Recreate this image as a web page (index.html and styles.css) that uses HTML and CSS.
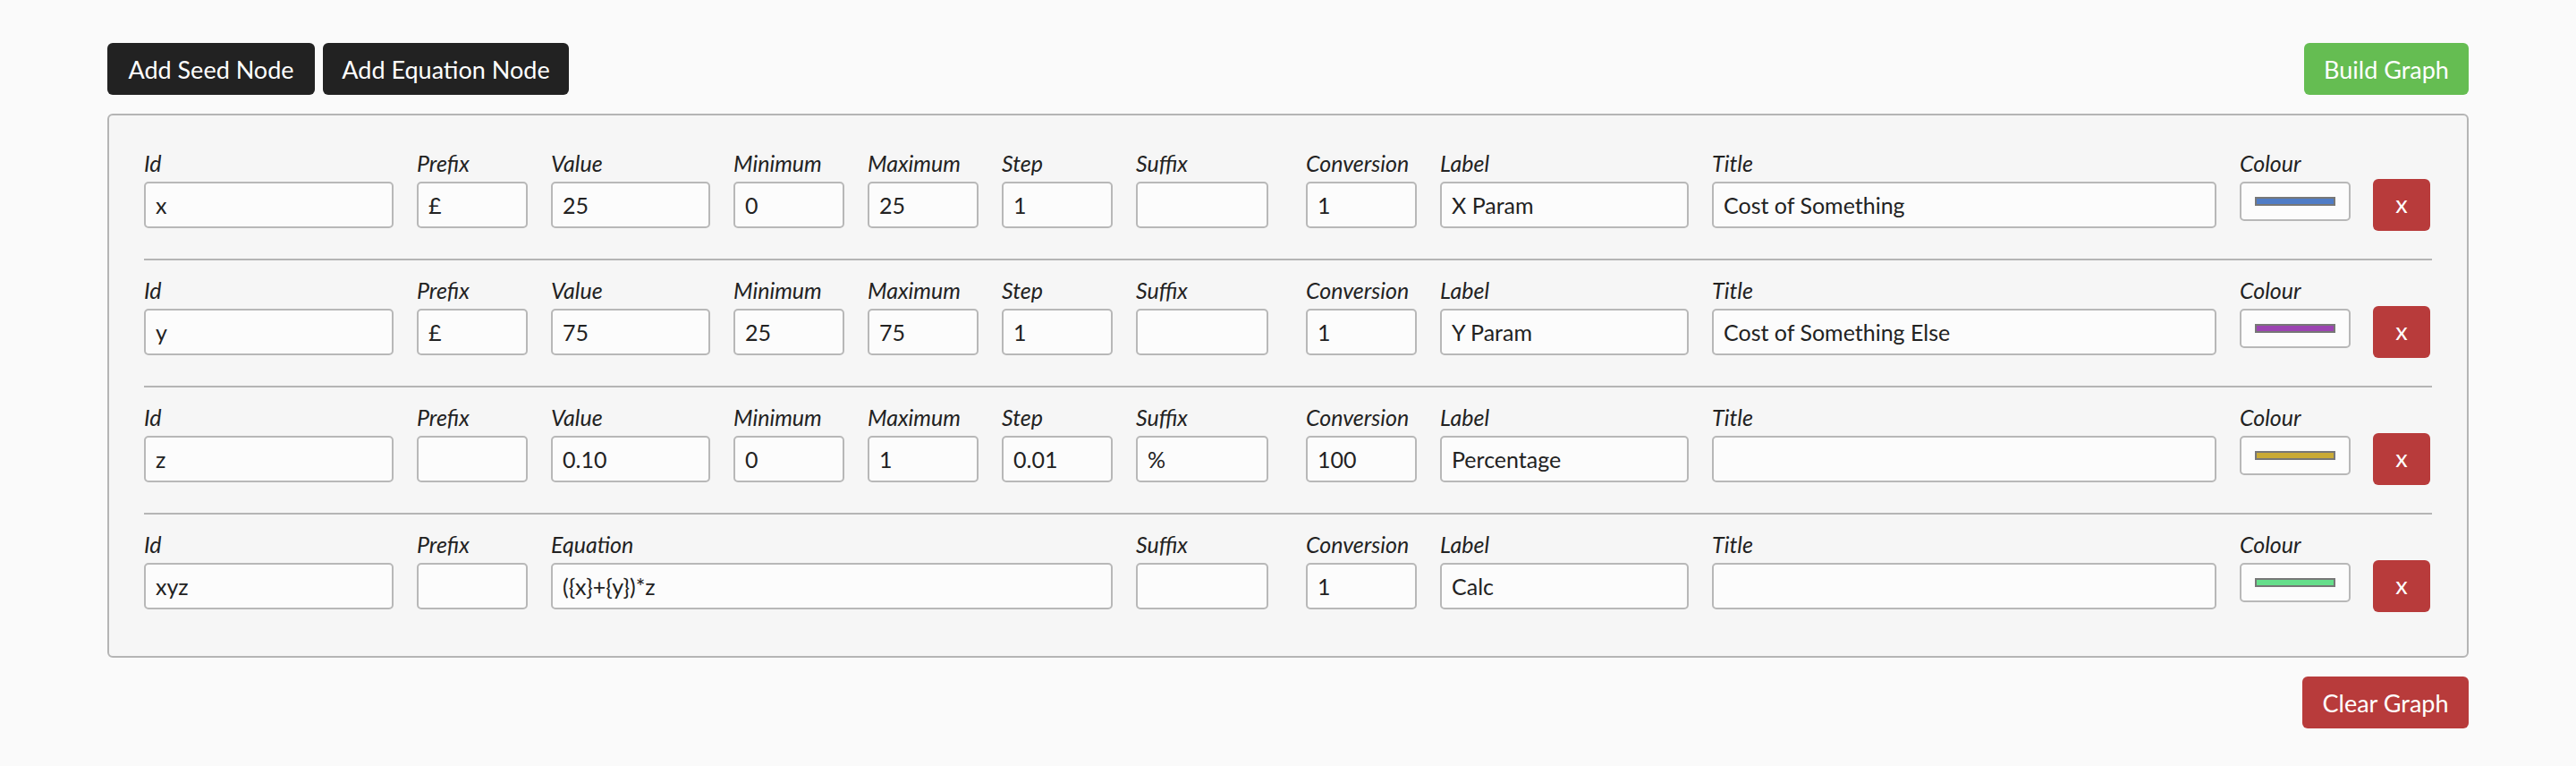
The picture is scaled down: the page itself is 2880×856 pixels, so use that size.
FILE: index.html
```html
<!DOCTYPE html>
<html lang="en">
<head>
<meta charset="utf-8">
<title>Graph Builder</title>
<link rel="stylesheet" href="styles.css">
</head>
<body>
<div class="container">
  <div class="toolbar">
    <div class="btn-group">
      <button class="btn btn-dark btn-seed">Add Seed Node</button>
      <button class="btn btn-dark btn-eq">Add Equation Node</button>
    </div>
    <button class="btn btn-green">Build Graph</button>
  </div>

  <div class="panel">
    <div class="node">
      <div class="field"><label class="lbl">Id</label><input class="inp" value="x"></div>
      <div class="field"><label class="lbl">Prefix</label><input class="inp" value="£"></div>
      <div class="field"><label class="lbl">Value</label><input class="inp" value="25"></div>
      <div class="field"><label class="lbl">Minimum</label><input class="inp" value="0"></div>
      <div class="field"><label class="lbl">Maximum</label><input class="inp" value="25"></div>
      <div class="field"><label class="lbl">Step</label><input class="inp" value="1"></div>
      <div class="field"><label class="lbl">Suffix</label><input class="inp inp-suffix" value=""></div>
      <div class="field"><label class="lbl">Conversion</label><input class="inp" value="1"></div>
      <div class="field"><label class="lbl">Label</label><input class="inp" value="X Param"></div>
      <div class="field"><label class="lbl">Title</label><input class="inp" value="Cost of Something"></div>
      <div class="field"><label class="lbl">Colour</label><div class="colour"><span class="swatch sw-blue"></span></div></div>
      <div class="field field-remove"><button class="btn-x">x</button></div>
    </div>
    <hr class="sep">
    <div class="node">
      <div class="field"><label class="lbl">Id</label><input class="inp" value="y"></div>
      <div class="field"><label class="lbl">Prefix</label><input class="inp" value="£"></div>
      <div class="field"><label class="lbl">Value</label><input class="inp" value="75"></div>
      <div class="field"><label class="lbl">Minimum</label><input class="inp" value="25"></div>
      <div class="field"><label class="lbl">Maximum</label><input class="inp" value="75"></div>
      <div class="field"><label class="lbl">Step</label><input class="inp" value="1"></div>
      <div class="field"><label class="lbl">Suffix</label><input class="inp inp-suffix" value=""></div>
      <div class="field"><label class="lbl">Conversion</label><input class="inp" value="1"></div>
      <div class="field"><label class="lbl">Label</label><input class="inp" value="Y Param"></div>
      <div class="field"><label class="lbl">Title</label><input class="inp" value="Cost of Something Else"></div>
      <div class="field"><label class="lbl">Colour</label><div class="colour"><span class="swatch sw-purple"></span></div></div>
      <div class="field field-remove"><button class="btn-x">x</button></div>
    </div>
    <hr class="sep">
    <div class="node">
      <div class="field"><label class="lbl">Id</label><input class="inp" value="z"></div>
      <div class="field"><label class="lbl">Prefix</label><input class="inp" value=""></div>
      <div class="field"><label class="lbl">Value</label><input class="inp" value="0.10"></div>
      <div class="field"><label class="lbl">Minimum</label><input class="inp" value="0"></div>
      <div class="field"><label class="lbl">Maximum</label><input class="inp" value="1"></div>
      <div class="field"><label class="lbl">Step</label><input class="inp" value="0.01"></div>
      <div class="field"><label class="lbl">Suffix</label><input class="inp inp-suffix" value="%"></div>
      <div class="field"><label class="lbl">Conversion</label><input class="inp" value="100"></div>
      <div class="field"><label class="lbl">Label</label><input class="inp" value="Percentage"></div>
      <div class="field"><label class="lbl">Title</label><input class="inp" value=""></div>
      <div class="field"><label class="lbl">Colour</label><div class="colour"><span class="swatch sw-gold"></span></div></div>
      <div class="field field-remove"><button class="btn-x">x</button></div>
    </div>
    <hr class="sep">
    <div class="node">
      <div class="field"><label class="lbl">Id</label><input class="inp" value="xyz"></div>
      <div class="field"><label class="lbl">Prefix</label><input class="inp" value=""></div>
      <div class="field field-eq"><label class="lbl">Equation</label><input class="inp" value="({x}+{y})*z"></div>
      <div class="field"><label class="lbl">Suffix</label><input class="inp inp-suffix" value=""></div>
      <div class="field"><label class="lbl">Conversion</label><input class="inp" value="1"></div>
      <div class="field"><label class="lbl">Label</label><input class="inp" value="Calc"></div>
      <div class="field"><label class="lbl">Title</label><input class="inp" value=""></div>
      <div class="field"><label class="lbl">Colour</label><div class="colour"><span class="swatch sw-green"></span></div></div>
      <div class="field field-remove"><button class="btn-x">x</button></div>
    </div>
  </div>

  <div class="footer">
    <button class="btn btn-red">Clear Graph</button>
  </div>
</div>
</body>
</html>
```

FILE: styles.css
```css
* { box-sizing: border-box; }

html, body {
  margin: 0;
  padding: 0;
  background: #fafafa;
  color: #222222;
  font-family: Lato, "Open Sans", sans-serif;
}

.container {
  width: 2640px;
  margin: 0 auto;
  padding-top: 48px;
}

.toolbar {
  display: flex;
  justify-content: space-between;
  align-items: center;
}

.btn-group {
  display: flex;
  gap: 9px;
}

.btn {
  height: 58px;
  border: none;
  border-radius: 6px;
  padding: 0;
  font-family: Lato, "Open Sans", sans-serif;
  font-size: 27px;
  color: #ffffff;
  cursor: pointer;
  white-space: nowrap;
}

.btn-dark { background: #222222; }
.btn-seed { width: 232px; }
.btn-eq { width: 275px; }
.btn-green { background: #65bd52; width: 184px; }
.btn-red { background: #b83b3b; width: 186px; }

.panel {
  margin-top: 21px;
  border: 2px solid #b5b5b5;
  border-radius: 6px;
  background: #f6f6f6;
  padding: 38px 39px 52px 39px;
}

.node {
  display: grid;
  grid-template-columns: 279px 124px 178px 124px 124px 124px 164px 124px 278px 564px 123px 64px;
  column-gap: 26px;
  align-items: start;
}

.field {
  display: flex;
  flex-direction: column;
}

.field-eq { grid-column: span 4; }

.field-remove {
  align-self: stretch;
  justify-content: flex-end;
}

.lbl {
  display: block;
  height: 30px;
  line-height: 30px;
  margin-bottom: 6px;
  font-size: 25px;
  font-style: italic;
  color: #222222;
  white-space: nowrap;
}

.inp {
  width: 100%;
  height: 52px;
  border: 2px solid #b8b8b8;
  border-radius: 5px;
  background: #fcfcfc;
  padding: 0 11px;
  font-family: Lato, "Open Sans", sans-serif;
  font-size: 25px;
  color: #222222;
  outline: none;
}

.inp-suffix { width: 148px; }

.colour {
  width: 124px;
  height: 44px;
  border: 2px solid #b8b8b8;
  border-radius: 5px;
  background: #fcfcfc;
  display: flex;
  align-items: center;
  justify-content: center;
}

.swatch {
  display: block;
  width: 90px;
  height: 10px;
  border: 2px solid #777777;
}

.sw-blue { background: #4f7cc6; }
.sw-purple { background: #9c44b2; }
.sw-gold { background: #c9aa36; }
.sw-green { background: #66de8b; }

.btn-x {
  width: 64px;
  height: 58px;
  margin-bottom: -3px;
  border: none;
  border-radius: 6px;
  background: #b83b3b;
  color: #ffffff;
  font-family: Lato, "Open Sans", sans-serif;
  font-size: 27px;
  line-height: 1;
  padding: 0 0 4px 0;
  cursor: pointer;
}

.sep {
  border: none;
  height: 2px;
  background: #b5b5b5;
  margin: 34px 0 18px 0;
}

.footer {
  display: flex;
  justify-content: flex-end;
  margin-top: 21px;
}
```
